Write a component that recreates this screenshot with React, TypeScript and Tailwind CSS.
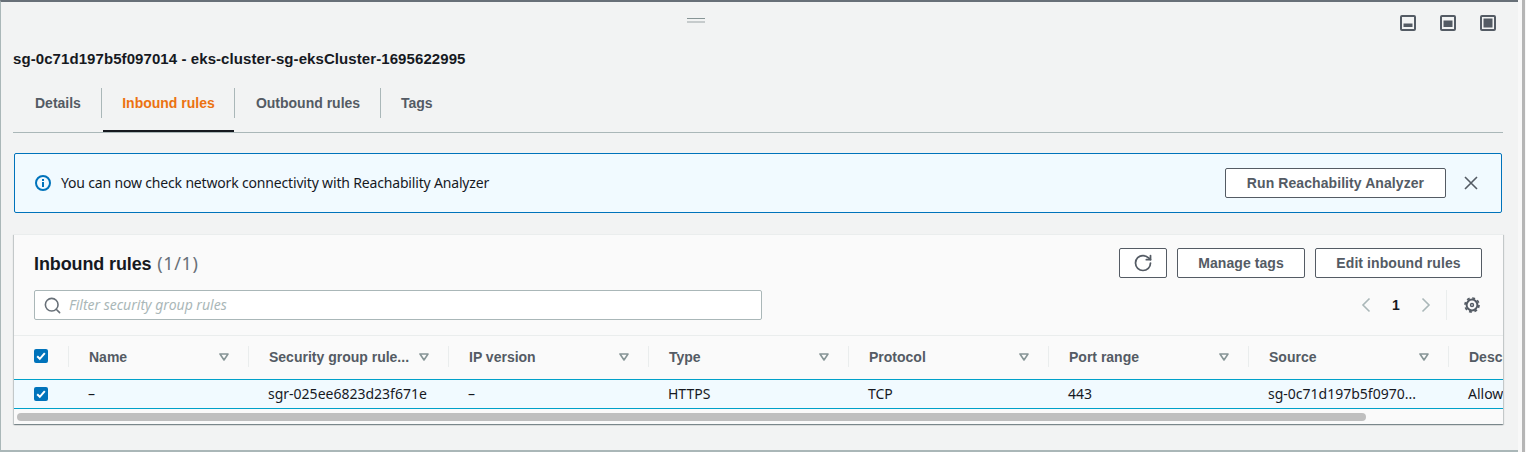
import { RotateCw, Search } from "lucide-react";

const columns = [
  { label: "Name", value: "–", width: "w-[180px]" },
  { label: "Security group rule...", value: "sgr-025ee6823d23f671e", width: "w-[200px]" },
  { label: "IP version", value: "–", width: "w-[200px]" },
  { label: "Type", value: "HTTPS", width: "w-[200px]" },
  { label: "Protocol", value: "TCP", width: "w-[200px]" },
  { label: "Port range", value: "443", width: "w-[200px]" },
  { label: "Source", value: "sg-0c71d197b5f0970...", width: "w-[200px]" },
];

const bold = "font-['Liberation_Sans',sans-serif] font-bold";

function PanelIcon({ mode }: { mode: "bottom" | "middle" | "full" }) {
  const fill = mode === "bottom" ? { y: 8.5, h: 3.5 } : mode === "middle" ? { y: 5.5, h: 6.5 } : { y: 3.5, h: 9 };
  return (
    <svg width="16" height="16" viewBox="0 0 16 16">
      <rect x="1" y="1" width="14" height="14" rx="1" fill="#f2f3f3" stroke="#545b64" strokeWidth="2" />
      <rect x="3.5" y={fill.y} width="9" height={fill.h} fill="#545b64" />
    </svg>
  );
}

function FilterCaret() {
  return (
    <svg width="10" height="8" viewBox="0 0 10 8" className="shrink-0">
      <path d="M1 1h8L5 7z" fill="none" stroke="#879596" strokeWidth="1.6" strokeLinejoin="round" />
    </svg>
  );
}

function Checkbox() {
  return (
    <span className="flex h-[14px] w-[14px] items-center justify-center rounded-[2px] bg-[#0073bb]">
      <svg width="12" height="12" viewBox="0 0 12 12">
        <path d="M2.2 6.2l2.6 2.6 5-5.6" fill="none" stroke="#fff" strokeWidth="2" />
      </svg>
    </span>
  );
}

function OutlineButton({ className, children }: { className: string; children: React.ReactNode }) {
  return (
    <button className={`flex h-[30px] items-center justify-center rounded-[2px] border border-[#545b64] bg-white text-[14px] tracking-[0.08px] text-[#545b64] ${bold} ${className}`}>
      {children}
    </button>
  );
}

export default function App() {
  return (
    <div className="flex h-[452px] w-[1526px] overflow-hidden bg-[#f2f3f3] font-['Noto_Sans',sans-serif] text-[14px] text-[#16191f]">
      <div className="flex h-full w-[1518px] flex-col border-b-2 border-l border-t-2 border-[#aab7b8] border-t-[#687078]">
        {/* drag handle + split panel position icons */}
        <div className="flex h-[38px] items-start pt-[13px]">
          <div className="ml-[686px] mt-[3px] flex w-[18px] flex-col">
            <span className="h-px bg-[#879596]" />
            <span className="mt-[2px] h-[2px] bg-[#c6cbcc]" />
          </div>
          <div className="ml-[695px] flex gap-6">
            <PanelIcon mode="bottom" />
            <PanelIcon mode="middle" />
            <PanelIcon mode="full" />
          </div>
        </div>

        <h2 className={`ml-3 mt-[9px] h-5 text-[15px] leading-5 tracking-[0.08px] ${bold}`}>sg-0c71d197b5f097014 - eks-cluster-sg-eksCluster-1695622995</h2>

        <div className={`ml-3 mt-[19px] flex h-[45px] w-[1490px] items-start border-b border-[#aab7b8] text-[#545b64] ${bold}`}>
          <div className="flex h-[30px] w-[89px] items-center border-r border-[#aab7b8] pl-[22px]">Details</div>
          <div className="relative flex h-[30px] w-[133px] items-center justify-center border-r border-[#aab7b8] pl-px text-[#ec7211]">
            Inbound rules
            <span className="absolute -bottom-[14px] left-[1px] right-0 h-[2px] bg-[#16191f]" />
          </div>
          <div className="flex h-[30px] w-[146px] items-center justify-center border-r border-[#aab7b8] pl-px">Outbound rules</div>
          <div className="pl-5 leading-[30px]">Tags</div>
        </div>

        <div className="ml-[13px] mt-5 flex h-[60px] w-[1488px] items-center rounded-[2px] border border-[#0073bb] bg-[#f1faff] pl-5 pr-[22px]">
          <svg width="16" height="16" viewBox="0 0 16 16" className="shrink-0">
            <circle cx="8" cy="8" r="7" fill="none" stroke="#0073bb" strokeWidth="2" />
            <rect x="7" y="7" width="2" height="5" fill="#0073bb" />
            <rect x="7" y="4" width="2" height="2" fill="#0073bb" />
          </svg>
          <span className="ml-[10px] grow pb-[2px] tracking-[-0.17px]">You can now check network connectivity with Reachability Analyzer</span>
          <OutlineButton className="w-[221px]">Run Reachability Analyzer</OutlineButton>
          <svg width="16" height="16" viewBox="0 0 16 16" className="ml-[17px] shrink-0" fill="none" stroke="#545b64" strokeWidth="1.6">
            <path d="M2 2l12 12M14 2L2 14" />
          </svg>
        </div>

        <div className="ml-[13px] mt-[21px] flex h-[190px] w-[1489px] flex-col overflow-hidden border-t border-[#eaeded] bg-[#fafafa] shadow-[0_1px_1px_0_rgba(0,28,36,0.3),1px_1px_1px_0_rgba(0,28,36,0.15),-1px_1px_1px_0_rgba(0,28,36,0.15)]">
          <div className="flex h-[101px] shrink-0 flex-col border-b border-[#eaeded] pl-5 pr-[21px] pt-[13px]">
            <div className="flex h-[30px] items-center">
              <h3 className={`grow pt-[2px] text-[18px] tracking-[-0.12px] ${bold}`}>
                Inbound rules{" "}
                <span className="ml-px font-['Noto_Sans',sans-serif] font-normal tracking-[0.6px] text-[#687078]">(1/1)</span>
              </h3>
              <OutlineButton className="w-[48px]">
                <RotateCw size={20} strokeWidth={2.1} />
              </OutlineButton>
              <OutlineButton className="ml-[10px] w-[128px]">Manage tags</OutlineButton>
              <OutlineButton className="ml-[10px] w-[167px]">Edit inbound rules</OutlineButton>
            </div>
            <div className="mt-3 flex h-[30px] items-center">
              <div className="flex h-[30px] w-[728px] items-center rounded-[2px] border border-[#aab7b8] bg-white pl-2">
                <Search size={19} strokeWidth={2} className="shrink-0 text-[#687078]" />
                <span className="ml-[7px] pb-[2px] italic text-[#aab7b8]">Filter security group rules</span>
              </div>
              <div className="ml-[599px] flex items-center">
                <svg width="10" height="16" viewBox="0 0 10 16" fill="none" stroke="#aab7b8" strokeWidth="1.6">
                  <path d="M8.5 1.5L2 8l6.5 6.5" />
                </svg>
                <span className={`mx-[15px] w-[20px] text-center text-[#16191f] ${bold}`}>1</span>
                <svg width="10" height="16" viewBox="0 0 10 16" fill="none" stroke="#aab7b8" strokeWidth="1.6">
                  <path d="M1.5 1.5L8 8l-6.5 6.5" />
                </svg>
              </div>
              <div className="ml-[15px] h-[30px] w-px bg-[#eaeded]" />
              <svg width="18" height="18" viewBox="0 0 18 18" className="ml-4 shrink-0" fill="none" stroke="#545b64">
                <circle cx="9" cy="9" r="5.4" strokeWidth="2" />
                <circle cx="9" cy="9" r="7" strokeWidth="1.7" strokeDasharray="2.9 2.6" />
                <circle cx="9" cy="9" r="1.5" strokeWidth="1.4" />
              </svg>
            </div>
          </div>

          <div className="flex h-[43px] shrink-0 items-start pt-[10px]">
            <div className="flex h-[21px] w-[55px] shrink-0 items-center justify-end border-r border-[#eaeded] pb-[2px] pr-[20px]">
              <Checkbox />
            </div>
            {columns.map((col) => (
              <div key={col.label} className={`flex h-[21px] shrink-0 items-center justify-between border-r border-[#eaeded] pl-5 pr-[19px] text-[#545b64] ${bold} ${col.width}`}>
                <span className="pt-[2px]">{col.label}</span>
                <FilterCaret />
              </div>
            ))}
            <div className={`h-[21px] shrink-0 pl-5 pt-px leading-[21px] text-[#545b64] ${bold}`}>Description</div>
          </div>

          <div className="flex h-[30px] shrink-0 items-center border-y border-[#00a1c9] bg-[#f1faff] pb-px">
            <div className="flex w-[55px] shrink-0 justify-end pr-[21px]">
              <Checkbox />
            </div>
            {columns.map((col) => (
              <div key={col.label} className={`shrink-0 pl-[19px] ${col.width}`}>{col.value}</div>
            ))}
            <div className="shrink-0 pl-[19px]">Allow</div>
          </div>

          <div className="px-[3px] pt-[4px]">
            <div className="h-2 w-[1349px] rounded-full bg-[#bfbfbf]" />
          </div>
        </div>
      </div>
      <div className="flex h-full w-[8px] shrink-0 bg-[#f8f8f8] pl-[4px]">
        <div className="h-full w-[3px] bg-[#b5b5b5]" />
      </div>
    </div>
  );
}
